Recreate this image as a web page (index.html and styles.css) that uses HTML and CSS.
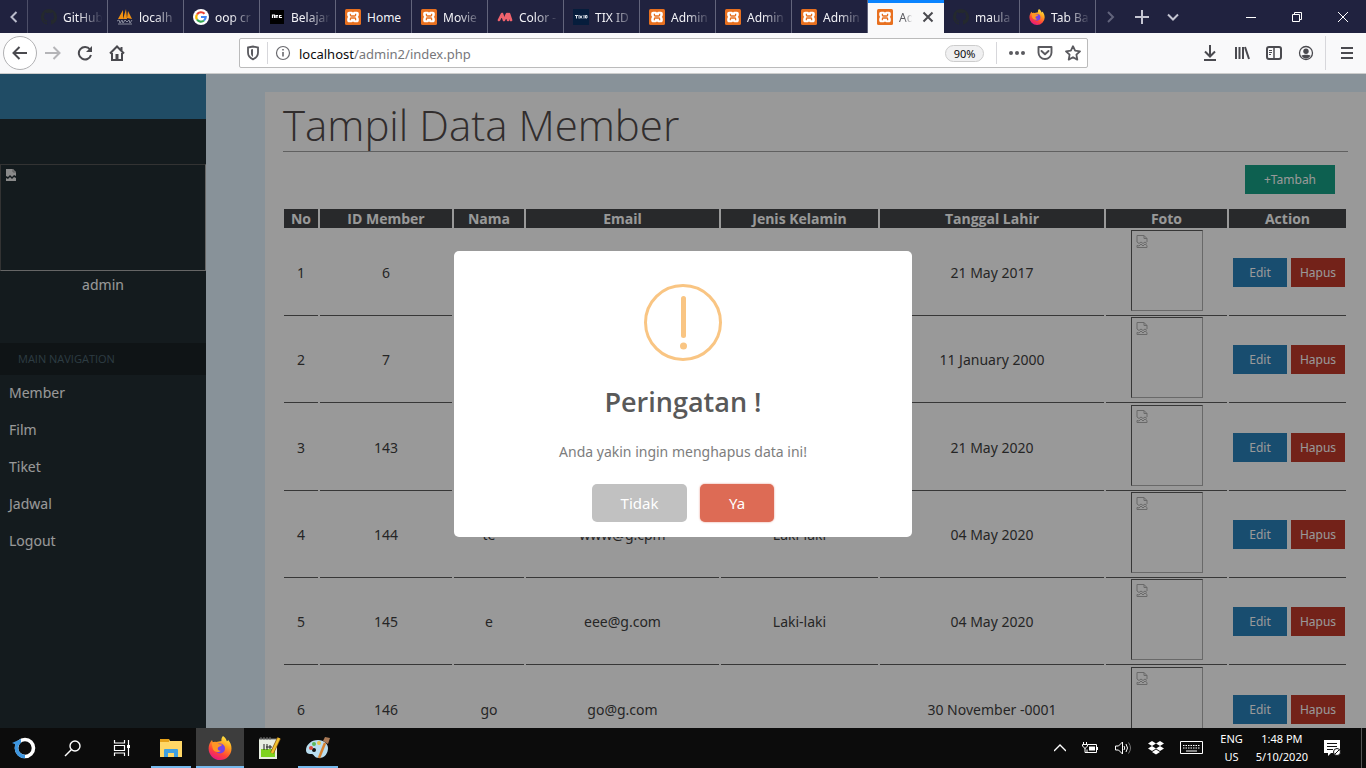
FILE: index.html
```html
<!DOCTYPE html>
<html lang="id">
<head>
<meta charset="utf-8">
<title>Tampil Data Member</title>
<link rel="stylesheet" href="styles.css">
</head>
<body>
<svg class="sprite" aria-hidden="true">
  <symbol id="xampp" viewBox="0 0 16 16"><rect width="16" height="16" rx="1.5" fill="#e8701f"/><path d="M4.200 2.700h2.300c.8 0 1.300.4 1.500 1 .2-.6.700-1 1.500-1h2.300c1.300 0 2 .8 2 1.900v1.500c0 .8-.4 1.500-1 1.900.6.4 1 1.100 1 1.900v1.500c0 1.100-.7 1.900-2 1.900H9.500c-.8 0-1.300-.4-1.500-1-.2.6-.7 1-1.500 1H4.200c-1.300 0-2-.8-2-1.900V9.900c0-.8.4-1.500 1-1.900-.6-.4-1-1.100-1-1.900V4.600c0-1.100.7-1.900 2-1.900z" fill="#fff"/><path d="M5.400 4.700v1.500q0 .8 1 .8h3.200q1 0 1-.8V4.700M5.400 11.300V9.800q0-.8 1-.8h3.200q1 0 1 .8v1.500" stroke="#e8701f" stroke-width="1.300" fill="none"/></symbol>
  <symbol id="github" viewBox="0 0 16 16"><path fill="#24292e" d="M8 0C3.580 0 0 3.580 0 8c0 3.540 2.290 6.530 5.470 7.590.4.070.55-.17.55-.38v-1.490c-2.010.37-2.530-.49-2.690-.94-.09-.23-.48-.94-.82-1.130-.28-.15-.68-.52-.01-.53.63-.01 1.080.58 1.230.82.72 1.210 1.870.87 2.330.66.070-.52.28-.87.51-1.070-1.780-.2-3.640-.89-3.640-3.950 0-.87.31-1.590.82-2.150-.08-.2-.36-1.020.08-2.120 0 0 .67-.21 2.200.82a7.600 7.600 0 0 1 4 0c1.530-1.040 2.200-.82 2.200-.82.44 1.100.16 1.920.08 2.120.51.56.82 1.270.82 2.150 0 3.070-1.870 3.750-3.650 3.950.29.25.54.73.54 1.480v2.200c0 .21.15.46.55.38A8 8 0 0 0 8 0z"/></symbol>
  <symbol id="firefox" viewBox="0 0 24 24"><defs><linearGradient id="fx" x1=".8" y1="0" x2=".3" y2="1"><stop offset="0" stop-color="#fff04a"/><stop offset=".35" stop-color="#ffa21e"/><stop offset=".7" stop-color="#ff4438"/><stop offset="1" stop-color="#e31587"/></linearGradient></defs><path d="M15 0c3 2 3.500 4 3.800 5.300 1-.1 1.200-1 1.200-1.500 2.300 2.500 3.500 5.300 3.500 8.700A11.400 11.400 0 0 1 12 24 11.400 11.400 0 0 1 .6 12.500C.6 9 2 6 4 4l.8 2.300c1-.6 2.200-.7 3.200-.4L13.500 5C13 3 14 1 15 0z" fill="url(#fx)"/><circle cx="12" cy="12.500" r="5" fill="#7542e5"/><path d="M3.500 6.500c3-1.500 5.500 0 6.500 1.500l4 .5c-.5 2-3 1.700-4 3-1 1.500.5 3.800 3 3.200-3 2.800-8 1-8.500-3z" fill="#ff9525"/></symbol>
  <symbol id="broken" viewBox="0 0 12 13"><path d="M1 7V.5h7l3 3V7M8 .5v3h3M1 7l2 1.500L5 7l2 1.500L9 7l2 1.500M1 10.500l2 .5 2-2 2 2 2-2 2 1.500v2H1z" fill="none" stroke="#b0b0b0"/></symbol>
</svg>

<header class="tabs">
  <button class="scroll-left" aria-label="Gulir kiri"><svg width="9" height="14" viewBox="0 0 9 14"><path d="M7.500 2L2.500 7l5 5" fill="none" stroke="#b9bbcb" stroke-width="2"/></svg></button>
  <a class="tab first" href="#"><svg class="fav"><use href="#github"/></svg><span>GitHub</span></a>
  <a class="tab" href="#"><svg class="fav" viewBox="0 0 16 16"><path d="M1 10L6 1v9zM6 10L9 0l1 10zM10 9l1-7 4 8z" fill="#f29111"/><path d="M0 12l2-1 1 3 2-3 1 3 2-3 2 2 2-2 1 3 2-3M1 15h14" stroke="#888b9c" fill="none"/></svg><span>localh</span></a>
  <a class="tab" href="#"><svg class="fav" viewBox="0 0 16 16"><circle cx="8" cy="8" r="8" fill="#fff"/><g fill="none" stroke-width="2.200"><path d="M11.500 4.800A4.700 4.700 0 0 0 4 5.500" stroke="#ea4335"/><path d="M4 5.500a4.700 4.700 0 0 0 0 5" stroke="#fbbc05"/><path d="M4 10.500a4.700 4.700 0 0 0 7 1" stroke="#34a853"/><path d="M11 11.500A4.700 4.700 0 0 0 12.700 8H8" stroke="#4285f4"/></g></svg><span>oop cr</span></a>
  <a class="tab" href="#"><svg class="fav" viewBox="0 0 16 16"><path d="M1 1h14v14H1z" fill="#000"/><path d="M3.500 9V6h2v3M7 9V6.500h2M7 8h2M12.500 6.500h-2v2h2.500" fill="none" stroke="#fff" stroke-width="1.200"/></svg><span>Belajar</span></a>
  <a class="tab" href="#"><svg class="fav"><use href="#xampp"/></svg><span class="whole">Home</span></a>
  <a class="tab" href="#"><svg class="fav"><use href="#xampp"/></svg><span>Movie</span></a>
  <a class="tab" href="#"><svg class="fav" viewBox="0 0 16 16"><path d="M2 11l3-6 2 6 3-6 1 6M12 5l2 6" fill="none" stroke="#f0626d" stroke-width="2.600" stroke-linejoin="round" stroke-linecap="round"/></svg><span>Color -</span></a>
  <a class="tab" href="#"><svg class="fav" viewBox="0 0 16 16"><path d="M0 0h16v16H0z" fill="#061d3c"/><path d="M2 6.500h3M3.500 6.500v3M6 6v3.500M7 6.500l2 3M9 6.500l-2 3M11 6v3.500M12.500 6.500H14v2.500h-1.500z" stroke="#dde3ea" fill="none"/></svg><span>TIX ID</span></a>
  <a class="tab" href="#"><svg class="fav"><use href="#xampp"/></svg><span>Admin</span></a>
  <a class="tab" href="#"><svg class="fav"><use href="#xampp"/></svg><span>Admin</span></a>
  <a class="tab" href="#"><svg class="fav"><use href="#xampp"/></svg><span>Admin</span></a>
  <div class="tab active"><svg class="fav"><use href="#xampp"/></svg><span>Ad</span><button aria-label="Tutup tab"><svg width="12" height="12" viewBox="0 0 12 12"><path d="M1.500 1.500l9 9M10.500 1.500l-9 9" stroke="#4a4a4f" stroke-width="2"/></svg></button></div>
  <a class="tab" href="#"><svg class="fav"><use href="#github"/></svg><span>maula</span></a>
  <a class="tab" href="#"><svg class="fav"><use href="#firefox"/></svg><span>Tab Ba</span></a>
  <div class="tab-tools">
    <button aria-label="Gulir kanan"><svg width="14" height="14" viewBox="0 0 14 14"><path d="M4 2l5 5-5 5" fill="none" stroke="#62647c" stroke-width="2"/></svg></button>
    <button aria-label="Tab baru"><svg width="14" height="14" viewBox="0 0 14 14"><path d="M7 0v14M0 7h14" stroke="#c4c5d2" stroke-width="2"/></svg></button>
    <button aria-label="Daftar tab"><svg width="14" height="14" viewBox="0 0 14 14"><path d="M2 4.500l5 5 5-5" fill="none" stroke="#c4c5d2" stroke-width="2"/></svg></button>
  </div>
  <div class="window-tools">
    <button aria-label="Kecilkan"><svg width="10" height="10"><path d="M0 5.500h10" stroke="#fff"/></svg></button>
    <button aria-label="Pulihkan"><svg width="10" height="10" fill="none" stroke="#fff"><path d="M.5 2.500h7v7h-7zM2.500 2.500v-2h7v7h-2"/></svg></button>
    <button aria-label="Tutup"><svg width="10" height="10"><path d="M0 0l10 10M10 0L0 10" stroke="#fff"/></svg></button>
  </div>
</header>

<nav class="toolbar">
  <div class="nav-buttons">
    <button class="back" aria-label="Kembali"><svg width="16" height="16" viewBox="0 0 16 16"><path d="M15 8H2M7.500 2L1.500 8l6 6" fill="none" stroke="#4a4a4f" stroke-width="2"/></svg></button>
    <button aria-label="Maju"><svg width="16" height="16" viewBox="0 0 16 16"><path d="M0 8h14M8.500 2l6 6-6 6" fill="none" stroke="#b5b5b8" stroke-width="2"/></svg></button>
    <button aria-label="Muat ulang"><svg width="16" height="16" viewBox="0 0 16 16"><path d="M13 4.500A6.200 6.200 0 1 0 14 10" fill="none" stroke="#4a4a4f" stroke-width="2"/><path d="M15 1v6H9z" fill="#4a4a4f"/></svg></button>
    <button aria-label="Beranda"><svg width="16" height="16" viewBox="0 0 16 16"><path d="M1 8.500L8 1.500l7 7M3 8v7h10V8M12.500 6V2" fill="none" stroke="#4a4a4f" stroke-width="2"/><path d="M6.500 9h3v5h-3z" fill="#4a4a4f"/></svg></button>
  </div>
  <div class="address">
    <svg width="14" height="16" viewBox="0 0 14 16"><path d="M2 2.500L7 1.500l5 1v5c0 3-2 5.500-5 6.800C4 13 2 10.500 2 7.500z" fill="none" stroke="#5a5a5f" stroke-width="1.800"/><path d="M7 4l-2 .5v4c0 1.500.8 2.500 2 3.500z" fill="#5a5a5f"/></svg>
    <i class="bar"></i>
    <svg width="16" height="16" viewBox="0 0 16 16"><circle cx="8" cy="8" r="6.500" fill="none" stroke="#6a6a6f" stroke-width="1.200"/><path d="M8 7v4.500M8 4v1.600" stroke="#6a6a6f" stroke-width="1.600"/></svg>
    <div class="url"><b>localhost</b>/admin2/index.php</div>
    <button class="zoom">90%</button>
    <i class="bar wide"></i>
    <button aria-label="Menu halaman"><svg width="16" height="16" viewBox="0 0 16 16" fill="#5a5a5f"><circle cx="2" cy="8" r="2"/><circle cx="8" cy="8" r="2"/><circle cx="14" cy="8" r="2"/></svg></button>
    <button aria-label="Pocket"><svg width="16" height="16" viewBox="0 0 16 16"><path d="M1.500 2h13v5.500a6.500 6.500 0 0 1-13 0zM4.500 6L8 9.300 11.500 6" fill="none" stroke="#5a5a5f" stroke-width="1.900" stroke-linejoin="round" stroke-linecap="round"/></svg></button>
    <button aria-label="Markah"><svg width="16" height="16" viewBox="0 0 16 16"><path d="M8 1.200l2.100 4.500 4.900.6-3.600 3.400.9 4.900L8 12.200l-4.300 2.400.9-4.900L1 6.300l4.900-.6z" fill="none" stroke="#5a5a5f" stroke-width="1.800" stroke-linejoin="round"/></svg></button>
  </div>
  <div class="side-tools">
    <button aria-label="Unduhan"><svg width="16" height="16" viewBox="0 0 16 16"><path d="M8 0v11M3 6.500l5 5 5-5M2 15h12" fill="none" stroke="#4a4a4f" stroke-width="2"/></svg></button>
    <button aria-label="Pustaka"><svg width="16" height="16" viewBox="0 0 16 16"><path d="M2 2v12M5.500 2v12M9 2v12M11 2l4 12" stroke="#4a4a4f" stroke-width="2"/></svg></button>
    <button aria-label="Bilah samping"><svg width="16" height="16" viewBox="0 0 16 16"><rect x="1" y="2" width="14" height="12" rx="2" fill="none" stroke="#4a4a4f" stroke-width="2"/><path d="M8 2v12" stroke="#4a4a4f" stroke-width="1.500"/><path d="M3 5.500h3M3 7.500h3M3 9.500h2" stroke="#4a4a4f"/></svg></button>
    <button aria-label="Akun"><svg width="16" height="16" viewBox="0 0 16 16"><circle cx="8" cy="8" r="6.500" fill="none" stroke="#4a4a4f" stroke-width="1.300"/><circle cx="8" cy="6.300" r="2.700" fill="#4a4a4f"/><path d="M3.500 10.500c2-1 7-1 9 0-1 2-2.500 3-4.500 3s-3.500-1-4.500-3z" fill="#4a4a4f"/></svg></button>
    <i class="bar tall"></i>
    <button aria-label="Menu"><svg width="12" height="14" viewBox="0 0 12 14"><path d="M0 2h12M0 7h12M0 12h12" stroke="#4a4a4f" stroke-width="2"/></svg></button>
  </div>
</nav>

<div class="page">
  <aside class="sidebar">
    <div class="brand"></div>
    <div class="user">
      <div class="avatar"><svg width="12" height="13" viewBox="0 0 12 13"><path d="M1 0h7l3 3v4L9 6 7 8 5 6 3 8 1 7z" fill="#e6e6e6"/><path d="M1 9l2 1 2-2 2 2 2-2 2 1v3H1z" fill="#e6e6e6"/><path d="M8 0v3h3" stroke="#999" fill="none"/></svg></div>
      <p>admin</p>
    </div>
    <h2>MAIN NAVIGATION</h2>
    <nav class="menu">
      <a href="#">Member</a><a href="#">Film</a><a href="#">Tiket</a><a href="#">Jadwal</a><a href="#">Logout</a>
    </nav>
  </aside>
  <main class="content">
    <section class="panel">
      <h1>Tampil Data Member</h1>
      <div class="actions"><button class="btn add">+Tambah</button></div>
      <table>
        <colgroup><col class="c-no"><col class="c-id"><col class="c-name"><col><col class="c-sex"><col class="c-date"><col class="c-photo"><col class="c-action"></colgroup>
        <thead><tr><th>No</th><th>ID Member</th><th>Nama</th><th>Email</th><th>Jenis Kelamin</th><th>Tanggal Lahir</th><th>Foto</th><th>Action</th></tr></thead>
        <tbody>
          <tr><td>1</td><td>6</td><td></td><td></td><td></td><td>21 May 2017</td><td><div class="photo"><svg width="12" height="13"><use href="#broken"/></svg></div></td><td><div class="pair"><button class="btn edit">Edit</button><button class="btn delete">Hapus</button></div></td></tr>
          <tr><td>2</td><td>7</td><td></td><td></td><td></td><td>11 January 2000</td><td><div class="photo"><svg width="12" height="13"><use href="#broken"/></svg></div></td><td><div class="pair"><button class="btn edit">Edit</button><button class="btn delete">Hapus</button></div></td></tr>
          <tr><td>3</td><td>143</td><td></td><td></td><td></td><td>21 May 2020</td><td><div class="photo"><svg width="12" height="13"><use href="#broken"/></svg></div></td><td><div class="pair"><button class="btn edit">Edit</button><button class="btn delete">Hapus</button></div></td></tr>
          <tr><td>4</td><td>144</td><td>te</td><td>www@g.cpm</td><td>Laki-laki</td><td>04 May 2020</td><td><div class="photo"><svg width="12" height="13"><use href="#broken"/></svg></div></td><td><div class="pair"><button class="btn edit">Edit</button><button class="btn delete">Hapus</button></div></td></tr>
          <tr><td>5</td><td>145</td><td>e</td><td>eee@g.com</td><td>Laki-laki</td><td>04 May 2020</td><td><div class="photo"><svg width="12" height="13"><use href="#broken"/></svg></div></td><td><div class="pair"><button class="btn edit">Edit</button><button class="btn delete">Hapus</button></div></td></tr>
          <tr><td>6</td><td>146</td><td>go</td><td>go@g.com</td><td></td><td>30 November -0001</td><td><div class="photo"><svg width="12" height="13"><use href="#broken"/></svg></div></td><td><div class="pair"><button class="btn edit">Edit</button><button class="btn delete">Hapus</button></div></td></tr>
        </tbody>
      </table>
    </section>
  </main>
  <div class="overlay">
    <div class="modal" role="dialog" aria-labelledby="modal-title">
      <svg class="warn" width="78" height="77" viewBox="0 0 78 77"><ellipse cx="39" cy="38.500" rx="37.500" ry="37" fill="none" stroke="#f9c583" stroke-width="3"/><rect x="37" y="12" width="5" height="42" rx="2.500" fill="#f9c583"/><circle cx="39.500" cy="62" r="3.500" fill="#f9c583"/></svg>
      <h2 id="modal-title">Peringatan !</h2>
      <p>Anda yakin ingin menghapus data ini!</p>
      <div class="choices"><button class="no">Tidak</button><button class="yes">Ya</button></div>
    </div>
  </div>
</div>

<footer class="taskbar">
  <div class="apps">
    <button aria-label="Mulai"><svg width="24" height="24" viewBox="0 0 24 24" fill="none" stroke-width="3.600"><circle cx="13" cy="12" r="8.500" stroke="#fff"/><path d="M13 20.500A8.500 8.500 0 0 1 7 6" stroke="#3d96e0"/><path d="M0 7l9-4v4L5 9z" fill="#3d96e0"/></svg></button>
    <button aria-label="Cari"><svg width="18" height="18" viewBox="0 0 18 18"><circle cx="11" cy="7" r="5" fill="none" stroke="#fff" stroke-width="1.400"/><path d="M7.500 10.500L1 17" stroke="#fff" stroke-width="1.400"/></svg></button>
    <button aria-label="Tampilan tugas"><svg width="18" height="18" viewBox="0 0 18 18"><path d="M1.500 1v3h10V1M1.500 6.500h10v5h-10zM1.500 17v-3h10v3M15.500 1v16" fill="none" stroke="#fff" stroke-width="1.200"/><path d="M14 6h3v3h-3z" fill="#fff"/></svg></button>
    <button class="open" aria-label="Penjelajah berkas"><svg width="24" height="20" viewBox="0 0 24 20"><path d="M1 1h9l1 2h12v16H1z" fill="#ffd766"/><path d="M1 1h9v3H1z" fill="#e6a21a"/><path d="M5 19v-7q0-1 1-1h12q1 0 1 1v7h-4v-4H9v4z" fill="#3f9fe0"/></svg></button>
    <button class="open current" aria-label="Firefox"><svg width="24" height="24"><use href="#firefox"/></svg></button>
    <button aria-label="Notepad++"><svg width="24" height="24" viewBox="0 0 24 24"><path d="M2 3h18v20H2z" fill="#e8eee2"/><path d="M4 13h14v8H4z" fill="#7ed321"/><path d="M2 3h18M4 1v3M7 1v3M10 1v3M13 1v3" stroke="#777"/><path d="M7 14V8M10 14V8M9 11h6M13 9v4" stroke="#222"/><path d="M15 17L22 2" stroke="#8a5c18" stroke-width="4"/><path d="M15 17L22 2" stroke="#f2c12e" stroke-width="2.500"/></svg></button>
    <button class="open" aria-label="Paint"><svg width="26" height="24" viewBox="0 0 26 24"><path d="M13 4C6 4 1 9 1 14c0 4 3 4 6 4 2 0 2 4 7 4 6 0 9-5 9-10 0-4-4-8-10-8z" fill="#b9def0"/><circle cx="9" cy="14" r="2" fill="#111"/><circle cx="6" cy="12" r="2" fill="#d84a3e"/><circle cx="9" cy="8" r="2" fill="#5cb85c"/><circle cx="14" cy="7" r="2" fill="#e8c34a"/><path d="M14 22l6-15" stroke="#d68230" stroke-width="2.500"/><path d="M18 5l2-4 5 1-2 6z" fill="#a97956"/></svg></button>
  </div>
  <div class="tray">
    <svg width="12" height="8" viewBox="0 0 12 8"><path d="M0 7l6-6 6 6" fill="none" stroke="#fff" stroke-width="1.400"/></svg>
    <svg width="16" height="14" viewBox="0 0 16 14"><path d="M6 3.500h8.500v8H5v-3" fill="none" stroke="#fff"/><path d="M7 5.500h6v4H7zM15 6h1v3h-1z" fill="#fff"/><path d="M1.500 1v2M4.500 1v2M.5 3.500h5v1.500L3 7.500.5 5zM3 7v4.500h2.500" fill="none" stroke="#fff"/></svg>
    <svg width="18" height="14" viewBox="0 0 18 14" fill="none" stroke="#fff"><path d="M1.500 5v4h3l4 4V1l-4 4z"/><path d="M10 5q1.500 2 0 4M12 3q3 4 0 8"/><path d="M14.500 1.500q4 5.500 0 11" stroke="#777"/></svg>
    <svg width="16" height="14" viewBox="0 0 16 14" fill="#fff"><path d="M4 0l4 2.500L4 5 0 2.500zM12 0l4 2.500L12 5 8 2.500zM4 5l4 2.500L4 10 0 7.500zM12 5l4 2.500-4 2.500-4-2.500zM8 8.500l4 2.500-4 2.500L4 11z"/></svg>
    <svg width="24" height="14" viewBox="0 0 24 14" fill="none" stroke="#fff"><path d="M.5.500h22v12H.5z"/><path d="M3 4.500h17M3 7h17" stroke-dasharray="1.500 1"/><path d="M6 10h11"/></svg>
    <div class="lang">ENG<br>US</div>
    <div class="clock">1:48 PM<br>5/10/2020</div>
    <svg width="18" height="17" viewBox="0 0 18 17"><path d="M0 0h16v13H7l-3 3v-3H0z" fill="#fff"/><path d="M3 3.500h10M3 6.500h10M3 9.500h6" stroke="#111"/><circle cx="13" cy="12" r="3.500" fill="#fff" stroke="#111"/><path d="M11 14l4-4" stroke="#111"/></svg>
    <i class="desktop"></i>
  </div>
</footer>
</body>
</html>
```
FILE: styles.css
```css
* { box-sizing: border-box; }
body {
  margin: 0;
  height: 100vh;
  display: flex;
  flex-direction: column;
  overflow: hidden;
  font-family: "Noto Sans", "Open Sans", sans-serif;
  font-size: 14px;
}
button { font: inherit; border: 0; padding: 0; background: none; color: inherit; }
a { color: inherit; text-decoration: none; }
h1, h2, p { margin: 0; }
svg { flex: none; display: block; }
.sprite { position: absolute; width: 0; height: 0; }

/* Tab strip */
.tabs { display: flex; height: 33px; flex: none; background: #20223f; color: #f2f2f6; font-size: 12px; }
.scroll-left { width: 28px; display: grid; place-items: center; border-right: 1px solid #4d4f68; }
.tab { width: 76px; flex: none; display: flex; align-items: center; padding-left: 9px; gap: 6px; border-right: 1px solid #62647b; }
.tab.first { width: 80px; padding-left: 13px; }
.tab span { flex: 1; white-space: nowrap; line-height: 18px; padding-top: 2px; -webkit-mask-image: linear-gradient(to right, #000 35%, transparent 90%); mask-image: linear-gradient(to right, #000 35%, transparent 90%); }
.tab span.whole { -webkit-mask-image: none; mask-image: none; }
.fav { width: 16px; height: 16px; }
.tab.active { background: #f9f9fa; color: #5a5a5f; border-top: 3px solid #0a84ff; border-right: 0; padding-bottom: 3px; }
.tab.active button { width: 20px; margin-right: 8px; display: grid; place-items: center; }
.tab-tools { display: flex; padding-left: 7px; gap: 15px; }
.tab-tools button { width: 16px; display: grid; place-items: center; }
.window-tools { display: flex; margin-left: auto; }
.window-tools button { width: 46px; display: grid; place-items: center; }

/* Address toolbar */
.toolbar { display: flex; align-items: center; height: 41px; flex: none; background: #f9f9fa; border-bottom: 1px solid #ccc; }
.nav-buttons { display: flex; align-items: center; gap: 16px; padding-left: 3px; width: 239px; }
.nav-buttons .back { width: 34px; height: 34px; margin-right: -8px; border: 1px solid #b1b1b3; border-radius: 50%; background: #fff; display: grid; place-items: center; }
.address { flex: 1; max-width: 849px; height: 30px; display: flex; align-items: center; gap: 7px; padding: 0 6px; background: #fff; border: 1px solid #bbb; border-radius: 2px; }
.bar { width: 1px; height: 22px; background: #d7d7db; }
.bar.wide { margin: 0 5px; }
.bar.tall { height: 34px; }
.url { flex: 1; color: #77777b; font-size: 13px; line-height: 20px; padding: 2px 0 0 1px; }
.url b { font-weight: 400; color: #0c0c0d; }
.zoom { width: 39px; height: 17px; border: 1px solid #ccc; border-radius: 9px; background: #f0f0f1; font-size: 11px; line-height: 15px; color: #0c0c0d; }
.address button + button { margin-left: 5px; }
.side-tools { display: flex; align-items: center; gap: 16px; margin-left: auto; padding-right: 13px; }
.side-tools .bar { margin: 0 -1px 0 -5px; }

/* Page */
.page { flex: 1; min-height: 0; display: flex; position: relative; overflow: hidden; background: #e3f4ff; color: #3f3f3f; }
.sidebar { width: 206px; flex: none; background: #222d32; color: #fff; }
.brand { height: 45px; background: #367fa9; }
.user { height: 224px; padding-top: 45px; text-align: center; }
.avatar { height: 107px; border: 1px inset #aaa; padding: 4px; }
.user p { line-height: 20px; padding-top: 4px; }
.sidebar h2 { height: 32px; line-height: 32px; padding-left: 18px; font-family: "Open Sans", sans-serif; font-size: 11px; font-weight: 400; background: #1a2226; color: #4b646f; }
.menu a { display: block; height: 37px; line-height: 36px; padding-left: 9px; }
.content { flex: 1; min-width: 0; padding: 18px 0 0 59px; }
.panel { background: #fff; padding: 0 18px; min-height: 700px; }
h1 { font-family: "Open Sans", sans-serif; font-size: 42px; font-weight: 300; line-height: 66px; height: 60px; border-bottom: 1px solid #a0a0a0; color: #524b4b; }
.actions { display: flex; justify-content: flex-end; padding: 13px 13px 14px 0; }
.btn { width: 54px; height: 29px; padding-top: 1px; color: #fff; font-size: 12px; line-height: 28px; }
.add { width: 90px; background: #16a085; }
.edit { background: #2980b9; }
.delete { background: #c0392b; }
table { width: calc(100% + 1px); margin-left: -1px; table-layout: fixed; border-spacing: 2px 1px; text-align: center; }
.c-no { width: 34px; }
.c-id { width: 132px; }
.c-name { width: 70px; }
.c-sex { width: 157px; }
.c-date { width: 224px; }
.c-photo { width: 121px; }
.c-action { width: 117px; }
th { height: 20px; padding: 0; background: #434549; border-bottom: 1px solid #fff; color: #fff; font-family: "Open Sans", sans-serif; line-height: 19px; font-weight: 700; }
td { height: 86px; padding: 0; border-bottom: 1px solid #5d5d5d; }
tbody tr:nth-child(3n) td { height: 87px; }
.photo { width: 72px; height: 81px; margin: 0 auto 4px; padding: 4px; border: 1px solid; border-color: #5d5d5d #b0b0b0 #b0b0b0 #5d5d5d; }
.pair { display: flex; justify-content: flex-end; gap: 4px; padding-right: 1px; }

/* Confirmation dialog */
.overlay { position: absolute; inset: 0; display: flex; align-items: center; justify-content: center; padding-bottom: 14px; background: rgba(0, 0, 0, .4); }
.modal { width: 458px; max-width: 100%; padding: 33px 16px 15px; display: flex; flex-direction: column; align-items: center; border-radius: 5px; background: #fff; }
.modal h2 { margin-top: 22px; font-family: "Open Sans", sans-serif; font-size: 27px; font-weight: 600; line-height: 38px; color: #595959; }
.modal p { margin: 21px 0 22px; line-height: 20px; color: #7d7d7d; }
.choices { display: flex; gap: 13px; }
.choices button { height: 38px; border-radius: 5px; color: #fff; font-size: 15px; }
.choices .no { width: 95px; background: #c1c1c1; }
.choices .yes { width: 74px; background: #dd6b55; box-shadow: 0 0 2px rgba(221, 107, 85, .8); }

/* Taskbar */
.taskbar { display: flex; justify-content: space-between; height: 40px; flex: none; background: #0c0c0c; color: #fff; font-size: 11px; }
.apps { display: flex; gap: 1px; }
.apps button { width: 48px; display: grid; place-items: center; }
.apps .open { background: linear-gradient(#76b9ed, #76b9ed) no-repeat bottom / 40px 2px; }
.apps .current { background: #3d3d3d; border-bottom: 2px solid #76b9ed; padding-top: 2px; }
.tray { display: flex; align-items: center; gap: 16px; text-align: center; line-height: 18px; }
.clock { margin-left: -3px; }
.desktop { width: 1px; height: 40px; background: #555; margin: 0 4px 0 3px; }
```
